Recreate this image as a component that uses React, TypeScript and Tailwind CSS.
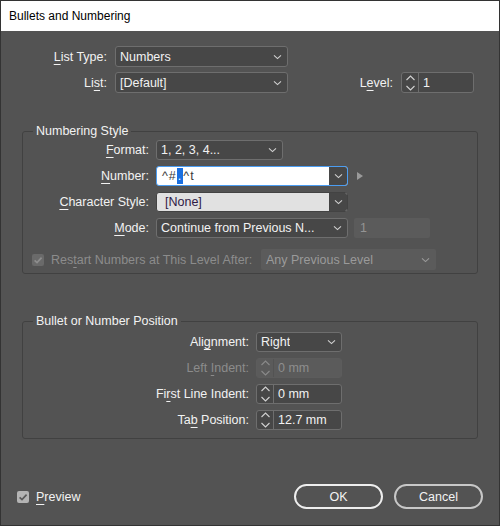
import type { ReactNode } from 'react';

function Chevron({ className = 'stroke-[#d2d2d2]' }: { className?: string }) {
  return (
    <svg width="9" height="6" viewBox="0 0 9 6" fill="none" className={className}>
      <path d="M1 1.3 L4.5 4.6 L8 1.3" strokeWidth="1.1" />
    </svg>
  );
}

function SpinArrows({ className = 'stroke-[#d2d2d2]' }: { className?: string }) {
  return (
    <svg width="11" height="18" viewBox="0 0 11 18" fill="none" className={className}>
      <path d="M1.5 6 L5.5 2 L9.5 6" strokeWidth="1.1" />
      <path d="M1.5 12 L5.5 16 L9.5 12" strokeWidth="1.1" />
    </svg>
  );
}

function Check({ className }: { className: string }) {
  return (
    <svg width="12" height="12" viewBox="0 0 12 12" fill="none" className={className}>
      <path d="M2.6 6.3 L5 8.6 L9.6 3.6" strokeWidth="1.7" />
    </svg>
  );
}

function Label({ children, className = 'w-[106px]', disabled }: { children: ReactNode; className?: string; disabled?: boolean }) {
  return (
    <span className={`${className} shrink-0 text-right ${disabled ? 'text-[#8c8c8c]' : 'text-[#f2f2f2]'}`}>
      {children}
    </span>
  );
}

function Key({ children }: { children: ReactNode }) {
  return <span className="underline underline-offset-[3px]">{children}</span>;
}

function Dropdown({ value, className }: { value: string; className: string }) {
  return (
    <div
      className={`${className} flex items-center justify-between rounded-[3px] border border-[#6e6e6e] bg-[#474747] pl-[4px] pr-[5px] text-[#f2f2f2]`}
    >
      <span className="truncate">{value}</span>
      <Chevron />
    </div>
  );
}

function Stepper({ value, className, disabled }: { value: string; className: string; disabled?: boolean }) {
  return (
    <div
      className={`${className} flex rounded-[3px] border ${
        disabled ? 'border-[#5c5c5c] bg-[#5b5b5b] text-[#8e8e8e]' : 'border-[#6e6e6e] bg-[#474747] text-[#f2f2f2]'
      }`}
    >
      <div
        className={`flex w-[17px] items-center justify-center border-r ${
          disabled ? 'border-[#535353]' : 'border-[#6e6e6e]'
        }`}
      >
        <SpinArrows className={disabled ? 'stroke-[#8a8a8a]' : 'stroke-[#d2d2d2]'} />
      </div>
      <span className="flex items-center pl-[4px]">{value}</span>
    </div>
  );
}

export default function App() {
  return (
    <div className="flex h-[526px] w-[500px] flex-col border border-[#333333] bg-[#535353] font-['Liberation_Sans',Arial,sans-serif] text-[12.5px] leading-[16px]">
      {/* title bar */}
      <div className="flex h-[30px] shrink-0 items-center bg-white pl-[8px] text-[12px] text-black">
        Bullets and Numbering
      </div>

      <div className="flex flex-1 flex-col">
        {/* list type / list / level */}
        <div className="flex flex-col gap-[5px] pt-[15px]">
          <div className="flex h-[21px] items-center gap-[8px]">
            <Label>
              <Key>L</Key>ist Type:
            </Label>
            <Dropdown value="Numbers" className="h-[21px] w-[173px]" />
          </div>
          <div className="flex h-[21px] items-center gap-[8px]">
            <Label>
              Li<Key>s</Key>t:
            </Label>
            <Dropdown value="[Default]" className="h-[21px] w-[173px]" />
            <Label className="w-[97px]">
              L<Key>e</Key>vel:
            </Label>
            <Stepper value="1" className="h-[21px] w-[73px]" />
          </div>
        </div>

        {/* numbering style */}
        <fieldset className="ml-[21px] mt-[30px] w-[456px] rounded-[3px] border border-[#414141] pb-[3px] pt-[1px]">
          <legend className="ml-[10px] px-[3px] text-[#f2f2f2]">Numbering Style</legend>
          <div className="flex flex-col gap-[6px]">
            <div className="flex h-[20px] items-center gap-[7px]">
              <Label className="w-[126px]">
                <Key>F</Key>ormat:
              </Label>
              <Dropdown value="1, 2, 3, 4..." className="h-[20px] w-[127px]" />
            </div>
            <div className="flex h-[20px] items-center gap-[7px]">
              <Label className="w-[126px]">
                <Key>N</Key>umber:
              </Label>
              <div className="flex h-[20px] w-[192px] overflow-hidden rounded-[3px] border border-[#4b9df2] bg-white">
                <span className="flex flex-1 items-center pl-[5px] tracking-[1px] text-[#3a3a3a]">
                  ^#<span className="bg-[#1a6fe0] px-[1px] text-white">.</span>^t
                </span>
                <span className="flex w-[18px] items-center justify-center bg-[#474747]">
                  <Chevron />
                </span>
              </div>
              <svg width="6" height="8" viewBox="0 0 6 8" className="ml-[2px] fill-[#9a9a9a]">
                <path d="M0 0 L6 4 L0 8 Z" />
              </svg>
            </div>
            <div className="flex h-[20px] items-center gap-[7px]">
              <Label className="w-[126px]">
                <Key>C</Key>haracter Style:
              </Label>
              <div className="flex h-[20px] w-[192px] overflow-hidden rounded-[3px] border border-[#434343] bg-[#e1e1e1]">
                <span className="flex flex-1 items-center pl-[8px] text-[#2f1a45]">[None]</span>
                <span className="flex w-[18px] items-center justify-center border-l border-[#434343] bg-[#474747]">
                  <Chevron />
                </span>
              </div>
            </div>
            <div className="flex h-[20px] items-center gap-[7px]">
              <Label className="w-[126px]">
                <Key>M</Key>ode:
              </Label>
              <Dropdown value="Continue from Previous N..." className="h-[20px] w-[192px]" />
              <span className="ml-[-1px] flex h-[20px] w-[76px] items-center rounded-[2px] bg-[#5b5b5b] pl-[6px] text-[#949494]">
                1
              </span>
            </div>
          </div>
          <div className="mt-[11px] flex h-[21px] items-center">
            <div className="flex w-[238px] items-center gap-[7px] pl-[9px] text-[#8c8c8c]">
              <span className="flex h-[12px] w-[12px] items-center justify-center rounded-[2px] bg-[#6a6a6a]">
                <Check className="stroke-[#8e8e8e]" />
              </span>
              <span className="whitespace-nowrap">
                Res<Key>t</Key>art Numbers at This Level After:
              </span>
            </div>
            <div className="flex h-[21px] w-[175px] items-center justify-between rounded-[2px] bg-[#5b5b5b] pl-[5px] pr-[6px] text-[#9a9a9a]">
              <span>Any Previous Level</span>
              <Chevron className="stroke-[#9a9a9a]" />
            </div>
          </div>
        </fieldset>

        {/* bullet or number position */}
        <fieldset className="ml-[21px] mt-[39px] w-[456px] rounded-[3px] border border-[#414141] pb-[8px] pt-[3px]">
          <legend className="ml-[10px] px-[3px] text-[#f2f2f2]">Bullet or Number Position</legend>
          <div className="flex flex-col gap-[6px]">
            <div className="flex h-[20px] items-center gap-[7px]">
              <Label className="w-[226px]">
                Ali<Key>g</Key>nment:
              </Label>
              <Dropdown value="Right" className="h-[20px] w-[86px]" />
            </div>
            <div className="flex h-[20px] items-center gap-[7px]">
              <Label className="w-[226px]" disabled>
                Left <Key>I</Key>ndent:
              </Label>
              <Stepper value="0 mm" className="h-[20px] w-[86px]" disabled />
            </div>
            <div className="flex h-[20px] items-center gap-[7px]">
              <Label className="w-[226px]">
                Fi<Key>r</Key>st Line Indent:
              </Label>
              <Stepper value="0 mm" className="h-[20px] w-[86px]" />
            </div>
            <div className="flex h-[20px] items-center gap-[7px]">
              <Label className="w-[226px]">
                Ta<Key>b</Key> Position:
              </Label>
              <Stepper value="12.7 mm" className="h-[20px] w-[86px]" />
            </div>
          </div>
        </fieldset>

        {/* footer */}
        <div className="mt-auto flex items-start pb-[16px] pl-[16px] pr-[16px]">
          <div className="flex items-center gap-[7px] pt-[5px] text-[#f2f2f2]">
            <span className="flex h-[12px] w-[12px] items-center justify-center rounded-[2px] bg-[#b4b4b4]">
              <Check className="stroke-[#5a5a5a]" />
            </span>
            <span>
              <Key>P</Key>review
            </span>
          </div>
          <div className="ml-auto flex gap-[11px]">
            <button className="h-[25px] w-[89px] rounded-full border-2 border-[#eeeeee] text-[#f4f4f4]">OK</button>
            <button className="h-[25px] w-[89px] rounded-full border-2 border-[#c8c8c8] text-[#f2f2f2]">Cancel</button>
          </div>
        </div>
      </div>
    </div>
  );
}
